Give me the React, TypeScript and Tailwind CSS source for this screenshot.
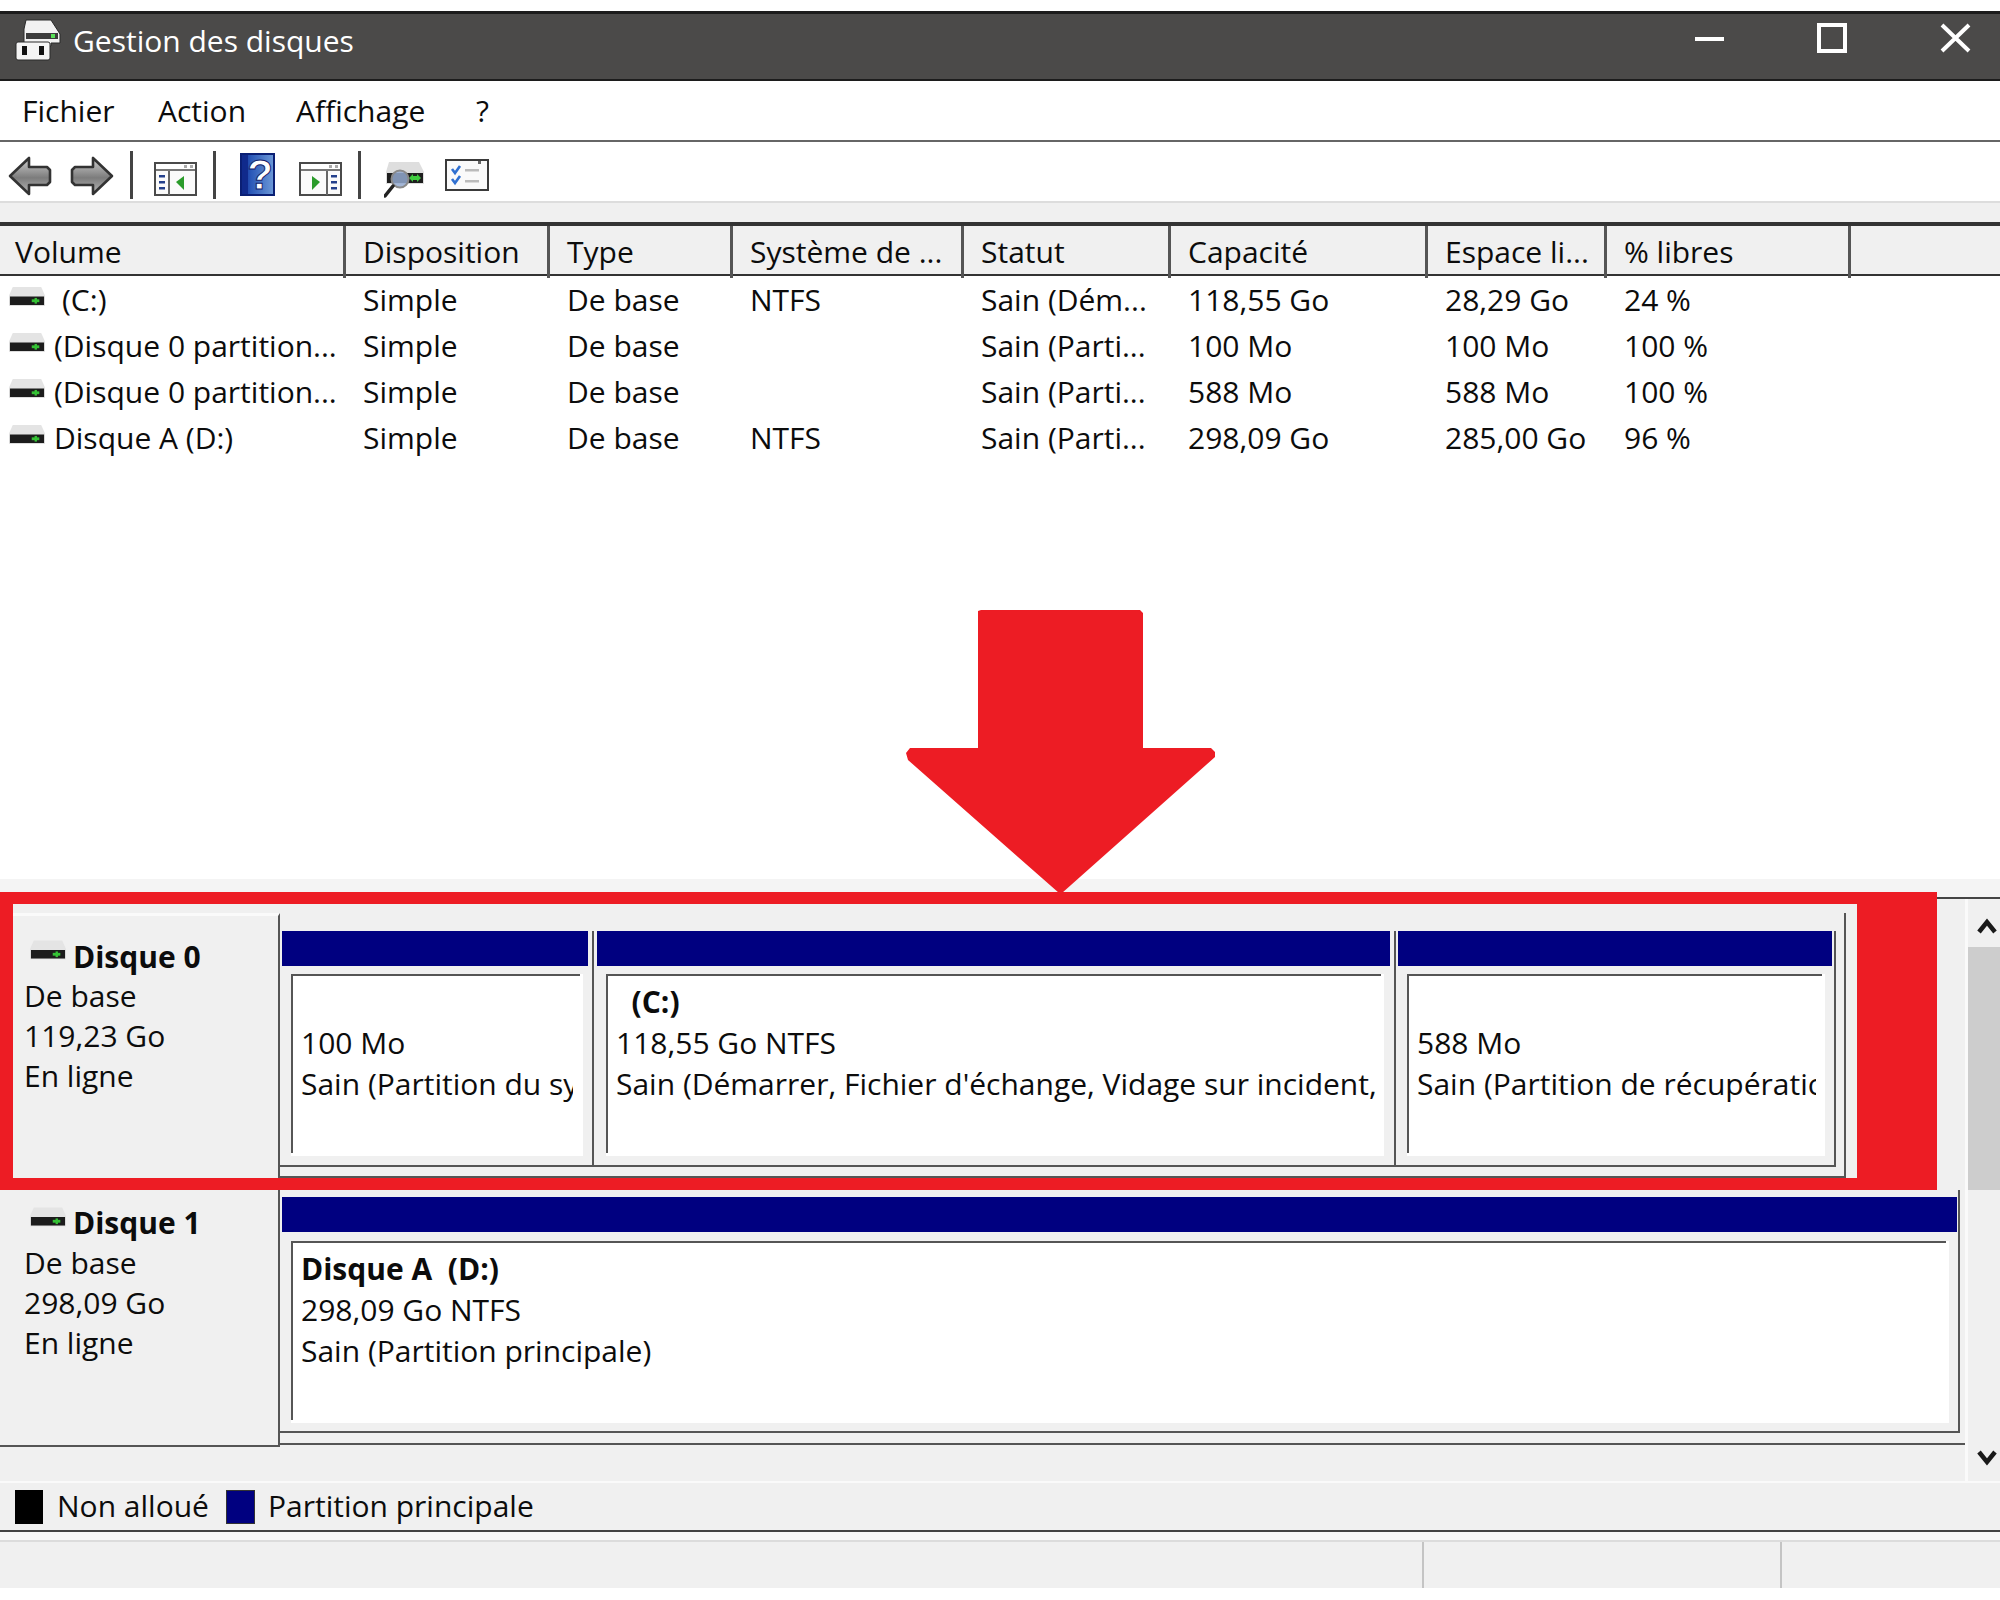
import React from "react";

const rows = [
  { v: "(C:)", d: "Simple", t: "De base", f: "NTFS", s: "Sain (Dém...", c: "118,55 Go", e: "28,29 Go", p: "24 %" },
  { v: "(Disque 0 partition...", d: "Simple", t: "De base", f: "", s: "Sain (Parti...", c: "100 Mo", e: "100 Mo", p: "100 %" },
  { v: "(Disque 0 partition...", d: "Simple", t: "De base", f: "", s: "Sain (Parti...", c: "588 Mo", e: "588 Mo", p: "100 %" },
  { v: "Disque A (D:)", d: "Simple", t: "De base", f: "NTFS", s: "Sain (Parti...", c: "298,09 Go", e: "285,00 Go", p: "96 %" },
];

const headers = ["Disposition", "Type", "Système de ...", "Statut", "Capacité", "Espace li...", "% libres"];

function Drive({ className }: { className: string }) {
  return (
    <svg viewBox="0 0 38 20" className={className}>
      <path d="M4 0H34L38 9V20H0V9Z" fill="#e4e4e4" />
      <rect x="1" y="10" width="36" height="9" fill="#1c1c1c" />
      <rect x="24" y="13" width="8" height="3" fill="#35c235" />
      <rect x="27" y="11.5" width="2.5" height="6" fill="#35c235" />
    </svg>
  );
}

function TitleIcon() {
  return (
    <svg viewBox="0 0 46 42" className="w-[46px] h-[42px] ml-[15px] shrink-0 mb-[14px]">
      <path d="M11 1H36L45 15V24H36V27H9V10Z" fill="#f2f2f2" stroke="#2a2a2a" strokeWidth="1" />
      <rect x="11" y="14" width="32" height="6" fill="#3c3c3c" />
      <rect x="36" y="15" width="4" height="4" fill="#58e058" />
      <rect x="1" y="23" width="34" height="18" rx="2" fill="#f4f4f4" stroke="#2a2a2a" strokeWidth="1" />
      <rect x="7" y="27" width="5" height="9" fill="#111" />
      <rect x="24" y="27" width="5" height="9" fill="#111" />
    </svg>
  );
}

function ArrowBtn({ flip, className }: { flip?: boolean; className: string }) {
  const id = flip ? "arr-r" : "arr-l";
  return (
    <svg viewBox="0 0 44 40" className={className}>
      <defs>
        <linearGradient id={id} x1="0" y1="0" x2="0" y2="1">
          <stop offset="0" stopColor="#cfcfcf" />
          <stop offset="0.55" stopColor="#7c7c7c" />
          <stop offset="1" stopColor="#b8b8b8" />
        </linearGradient>
      </defs>
      <g transform={flip ? "matrix(-1 0 0 1 44 0)" : undefined}>
        <path d="M2 20 21 2V11H39L42 14V26L39 29H21V38Z" fill={`url(#${id})`} stroke="#333" strokeWidth="2.6" strokeLinejoin="round" />
      </g>
    </svg>
  );
}

function Sep({ className }: { className: string }) {
  return <div className={`w-[3px] h-[48px] bg-[#444] shrink-0 mb-[2px] ${className}`} />;
}

function PanelIcon({ right, className }: { right?: boolean; className: string }) {
  return (
    <svg viewBox="0 0 43 34" className={className}>
      <rect x="1" y="1" width="41" height="32" fill="#fafafa" stroke="#4a4a4a" strokeWidth="2" />
      <rect x="2" y="2" width="39" height="6" fill="#fff" />
      <rect x="2" y="7" width="39" height="2" fill="#777" />
      <rect x="30" y="3" width="3" height="3" fill="#aaa" />
      <rect x="36" y="3" width="3" height="3" fill="#aaa" />
      <g transform={right ? "matrix(-1 0 0 1 43 0)" : undefined}>
        <rect x="14" y="9" width="2" height="24" fill="#666" />
        <rect x="5" y="13" width="6" height="2.5" fill="#24408c" />
        <rect x="5" y="19" width="6" height="2.5" fill="#24408c" />
        <rect x="5" y="25" width="6" height="2.5" fill="#24408c" />
        <path d="M22 20 30 14V28Z" fill="#2a9b2a" />
      </g>
    </svg>
  );
}

function HelpIcon({ className }: { className: string }) {
  return (
    <svg viewBox="0 0 35 43" className={className}>
      <defs>
        <linearGradient id="hlp" x1="0" y1="0" x2="1" y2="0">
          <stop offset="0" stopColor="#0c2a96" />
          <stop offset="0.3" stopColor="#2a58b8" />
          <stop offset="1" stopColor="#6e9ad8" />
        </linearGradient>
      </defs>
      <rect x="1" y="1" width="33" height="41" fill="url(#hlp)" stroke="#0a1f74" strokeWidth="2" />
      <rect x="2" y="2" width="6" height="39" fill="#102a8c" />
      <text x="20" y="36" textAnchor="middle" fontFamily="'Liberation Sans',sans-serif" fontWeight="700" fontSize="42" fill="#fff" stroke="#10206a" strokeWidth="1">?</text>
    </svg>
  );
}

function SearchDrive({ className }: { className: string }) {
  return (
    <svg viewBox="0 0 40 36" className={className}>
      <path d="M5 0H35L40 10V22H2V10Z" fill="#dedede" />
      <rect x="3" y="11" width="36" height="10" fill="#1e1e1e" />
      <path d="M25 16 29 12V14H33V12L37 16 33 20V18H29V20Z" fill="#3ecb3e" />
      <circle cx="16" cy="17" r="8.5" fill="#93a9cf" fillOpacity="0.85" stroke="#8a8a8a" strokeWidth="2" />
      <path d="M9 24 1 34" stroke="#222" strokeWidth="3.5" strokeLinecap="round" />
    </svg>
  );
}

function ChecklistIcon({ className }: { className: string }) {
  return (
    <svg viewBox="0 0 44 32" className={className}>
      <rect x="1" y="1" width="42" height="30" fill="#fafafa" stroke="#3a3a3a" strokeWidth="2" />
      <path d="M7 10 10 14 15 7M7 20 10 24 15 17" fill="none" stroke="#2f6fd0" strokeWidth="2.6" />
      <rect x="20" y="10" width="14" height="2.5" fill="#bbb" />
      <rect x="20" y="21" width="14" height="2.5" fill="#bbb" />
      <rect x="33" y="2" width="3" height="3" fill="#666" />
    </svg>
  );
}

function Chevron({ down }: { down?: boolean }) {
  return (
    <svg viewBox="0 0 20 18" className="w-[20px] h-[18px]">
      <path d={down ? "M2 3 10 13 18 3" : "M2 15 10 5 18 15"} fill="none" stroke="#1a1a1a" strokeWidth="4.5" />
    </svg>
  );
}

function Line({ children, bold }: { children?: React.ReactNode; bold?: boolean }) {
  return <div className={`h-[41px] leading-[41px] whitespace-nowrap ${bold ? "font-bold" : ""}`}>{children}</div>;
}

function LabelLine({ children }: { children: React.ReactNode }) {
  return <div className="h-[40px] leading-[40px] whitespace-nowrap">{children}</div>;
}

function PartBody({ clip, first, second, third, bold }: { clip: string; first?: string; second: string; third: string; bold?: boolean }) {
  return (
    <div className="h-[182px] bg-white">
      <div className="h-[179px] mr-[3px] border-t-2 border-l-2 border-[#555] pt-[5px] pl-[8px] overflow-hidden">
        <div className={`overflow-hidden ${clip}`}>
          <Line bold={bold}>{first}</Line>
          <Line>{second}</Line>
          <Line>{third}</Line>
        </div>
      </div>
    </div>
  );
}

export default function App() {
  return (
    <div className="relative w-[2000px] h-[1600px] overflow-hidden bg-white flex flex-col pt-[11px] pb-[12px] text-[30px] text-[#0c0c0c] font-['Open_Sans','Liberation_Sans',sans-serif]">
      {/* title bar */}
      <div className="h-[70px] shrink-0 bg-[#4b4a49] border-t-[3px] border-b-2 border-[#1c1c1c] flex items-center text-white">
        <TitleIcon />
        <span className="ml-[12px] mb-[13px]">Gestion des disques</span>
        <svg viewBox="0 0 280 30" className="w-[280px] h-[30px] ml-auto mr-[25px] mb-[17px]">
          <rect x="0" y="14" width="29" height="4" fill="#fff" />
          <rect x="124" y="2" width="26" height="26" fill="none" stroke="#fff" strokeWidth="4" />
          <path d="M247 2 274 28M274 2 247 28" stroke="#fff" strokeWidth="4" fill="none" />
        </svg>
      </div>
      {/* menu */}
      <div className="h-[61px] shrink-0 border-b-2 border-[#666] flex items-center">
        <span className="ml-[22px] w-[136px]">Fichier</span>
        <span className="w-[138px]">Action</span>
        <span className="w-[180px]">Affichage</span>
        <span>?</span>
      </div>
      {/* toolbar */}
      <div className="h-[61px] shrink-0 pt-[8px] border-b-2 border-[#ddd] flex items-center">
        <ArrowBtn className="w-[44px] h-[40px] ml-[8px] shrink-0" />
        <ArrowBtn flip className="w-[44px] h-[40px] ml-[18px] shrink-0" />
        <Sep className="ml-[16px]" />
        <PanelIcon className="w-[43px] h-[34px] ml-[21px] mt-[6px] shrink-0" />
        <Sep className="ml-[16px]" />
        <HelpIcon className="w-[35px] h-[43px] ml-[24px] mb-[3px] shrink-0" />
        <PanelIcon right className="w-[43px] h-[34px] ml-[24px] mt-[6px] shrink-0" />
        <Sep className="ml-[16px]" />
        <SearchDrive className="w-[40px] h-[36px] ml-[23px] mt-[8px] shrink-0" />
        <ChecklistIcon className="w-[44px] h-[32px] ml-[21px] mb-[2px] shrink-0" />
      </div>
      {/* strip */}
      <div className="h-[19px] shrink-0 bg-[#f0f0f0]" />
      {/* list header */}
      <div className="h-[54px] shrink-0 bg-[#f0f0f0] border-t-[4px] border-b-2 border-[#333] grid grid-cols-[346px_204px_183px_231px_207px_257px_179px_244px_1fr]">
        <div className="border-r-[3px] border-[#555] pl-[15px] leading-[52px]">Volume</div>
        {headers.map((h) => (
          <div key={h} className="border-r-[3px] border-[#555] pl-[17px] leading-[52px] whitespace-nowrap overflow-hidden">{h}</div>
        ))}
        <div />
      </div>
      {/* list */}
      <div className="flex-1">
        <div className="h-[2px]" />
        {rows.map((r, i) => (
          <div key={i} className="h-[46px] leading-[44px] grid grid-cols-[346px_204px_183px_231px_207px_257px_179px_244px_1fr]">
            <div className="flex items-center whitespace-nowrap overflow-hidden">
              <Drive className="w-[36px] h-[19px] ml-[9px] shrink-0 mb-[9px]" />
              <span className={i === 0 ? "ml-[17px] mb-[2px]" : "ml-[9px] mb-[2px]"}>{r.v}</span>
            </div>
            <div className="pl-[17px]">{r.d}</div>
            <div className="pl-[17px]">{r.t}</div>
            <div className="pl-[17px]">{r.f}</div>
            <div className="pl-[17px] whitespace-nowrap overflow-hidden">{r.s}</div>
            <div className="pl-[17px]">{r.c}</div>
            <div className="pl-[17px]">{r.e}</div>
            <div className="pl-[17px]">{r.p}</div>
          </div>
        ))}
      </div>
      {/* graphical pane */}
      <div className="h-[602px] shrink-0 bg-[#f0f0f0] flex flex-col">
        <div className="h-[18px] shrink-0 bg-[#f4f4f4] border-b-2 border-[#444] box-content" />
        <div className="flex-1 flex">
          <div className="w-[1965px] shrink-0">
            {/* disk 0 */}
            <div className="h-[291px] flex">
              <div className="w-[280px] shrink-0 mt-[14px] border-t-[3px] border-r-2 border-t-[#fafafa] border-r-[#555] pl-[24px] pt-[20px]">
                <div className="flex items-center gap-[7px] font-bold h-[40px] ml-[6px]">
                  <Drive className="w-[36px] h-[20px] mb-[12px] shrink-0" />
                  <span>Disque 0</span>
                </div>
                <LabelLine>De base</LabelLine>
                <LabelLine>119,23 Go</LabelLine>
                <LabelLine>En ligne</LabelLine>
              </div>
              <div className="w-[1566px] h-[265px] mt-[14px] pt-[18px] border-r-2 border-b-2 border-[#555]">
                <div className="w-[1556px] h-[236px] flex border-r-2 border-b-2 border-[#555]">
                  <div className="w-[314px] shrink-0 border-r-2 border-[#555]">
                    <div className="h-[35px] bg-[#000080] ml-[2px] mr-[4px]" />
                    <div className="mt-[8px] ml-[11px] mr-[9px]">
                      <PartBody clip="mr-[7px]" second="100 Mo" third="Sain (Partition du système)" />
                    </div>
                  </div>
                  <div className="w-[802px] shrink-0 border-r-2 border-[#555]">
                    <div className="h-[35px] bg-[#000080] ml-[3px] mr-[4px]" />
                    <div className="mt-[8px] ml-[12px] mr-[10px]">
                      <PartBody clip="mr-[5px]" bold first={"\u00A0\u00A0(C:)"} second="118,55 Go NTFS" third="Sain (Démarrer, Fichier d'échange, Vidage sur incident, Partition principale)" />
                    </div>
                  </div>
                  <div className="flex-1 min-w-0">
                    <div className="h-[35px] bg-[#000080] ml-[2px] mr-[2px]" />
                    <div className="mt-[8px] ml-[11px] mr-[9px]">
                      <PartBody clip="mr-[6px]" second="588 Mo" third="Sain (Partition de récupération)" />
                    </div>
                  </div>
                </div>
              </div>
            </div>
            {/* disk 1 */}
            <div className="flex">
              <div className="w-[280px] h-[257px] shrink-0 border-r-2 border-b-2 border-[#555] pl-[24px] pt-[12px]">
                <div className="flex items-center gap-[7px] font-bold h-[41px] ml-[6px]">
                  <Drive className="w-[36px] h-[20px] mb-[12px] shrink-0" />
                  <span>Disque 1</span>
                </div>
                <LabelLine>De base</LabelLine>
                <LabelLine>298,09 Go</LabelLine>
                <LabelLine>En ligne</LabelLine>
              </div>
              <div className="flex-1 min-w-0 h-[255px] border-b-2 border-[#555]">
                <div className="mr-[5px] h-[243px] pt-[7px] border-r-2 border-b-2 border-[#555]">
                  <div className="h-[35px] bg-[#000080] ml-[2px] mr-[1px]" />
                  <div className="mt-[9px] ml-[11px] mr-[9px]">
                    <PartBody clip="mr-[6px]" bold first={"Disque A\u00A0\u00A0(D:)"} second="298,09 Go NTFS" third="Sain (Partition principale)" />
                  </div>
                </div>
              </div>
            </div>
          </div>
          {/* scrollbar */}
          <div className="flex-1 border-l-[3px] border-[#fafafa] flex flex-col">
            <div className="h-[48px] flex items-start justify-center pt-[18px] pl-[5px]"><Chevron /></div>
            <div className="h-[243px] bg-[#cdcdcd]" />
            <div className="flex-1" />
            <div className="h-[44px] flex items-start justify-center pt-[12px] pl-[5px]"><Chevron down /></div>
          </div>
        </div>
      </div>
      {/* legend */}
      <div className="h-[51px] shrink-0 bg-[#f0f0f0] border-t-2 border-b-2 border-t-[#fafafa] border-b-[#444] flex items-center">
        <div className="w-[28px] h-[34px] ml-[15px] bg-black shrink-0" />
        <span className="ml-[14px] w-[169px] shrink-0 whitespace-nowrap mb-[2px]">Non alloué</span>
        <div className="w-[29px] h-[34px] bg-[#000080] shrink-0 border border-[#333]" />
        <span className="ml-[13px] whitespace-nowrap mb-[2px]">Partition principale</span>
      </div>
      {/* status */}
      <div className="h-[56px] shrink-0 flex flex-col">
        <div className="h-[8px] border-b-2 border-[#dcdcdc] bg-[#f8f8f8] box-content" />
        <div className="h-[46px] bg-[#f0f0f0] flex">
          <div className="w-[1424px] border-r-2 border-[#c4c4c4]" />
          <div className="w-[358px] border-r-2 border-[#c4c4c4]" />
        </div>
      </div>

      {/* red annotation */}
      <div className="absolute left-0 top-[892px] w-[1937px] h-[298px] border-solid border-[#ed1c24] border-l-[13px] border-t-[12px] border-r-[80px] border-b-[12px]" />
      <svg viewBox="0 0 309 283" className="absolute left-[906px] top-[610px] w-[309px] h-[283px]">
        <path d="M72 1 75 0H234L237 3V138H305L309 142V147L156 283H153L2 150 0 143 4 138H72Z" fill="#ed1c24" />
      </svg>
    </div>
  );
}
